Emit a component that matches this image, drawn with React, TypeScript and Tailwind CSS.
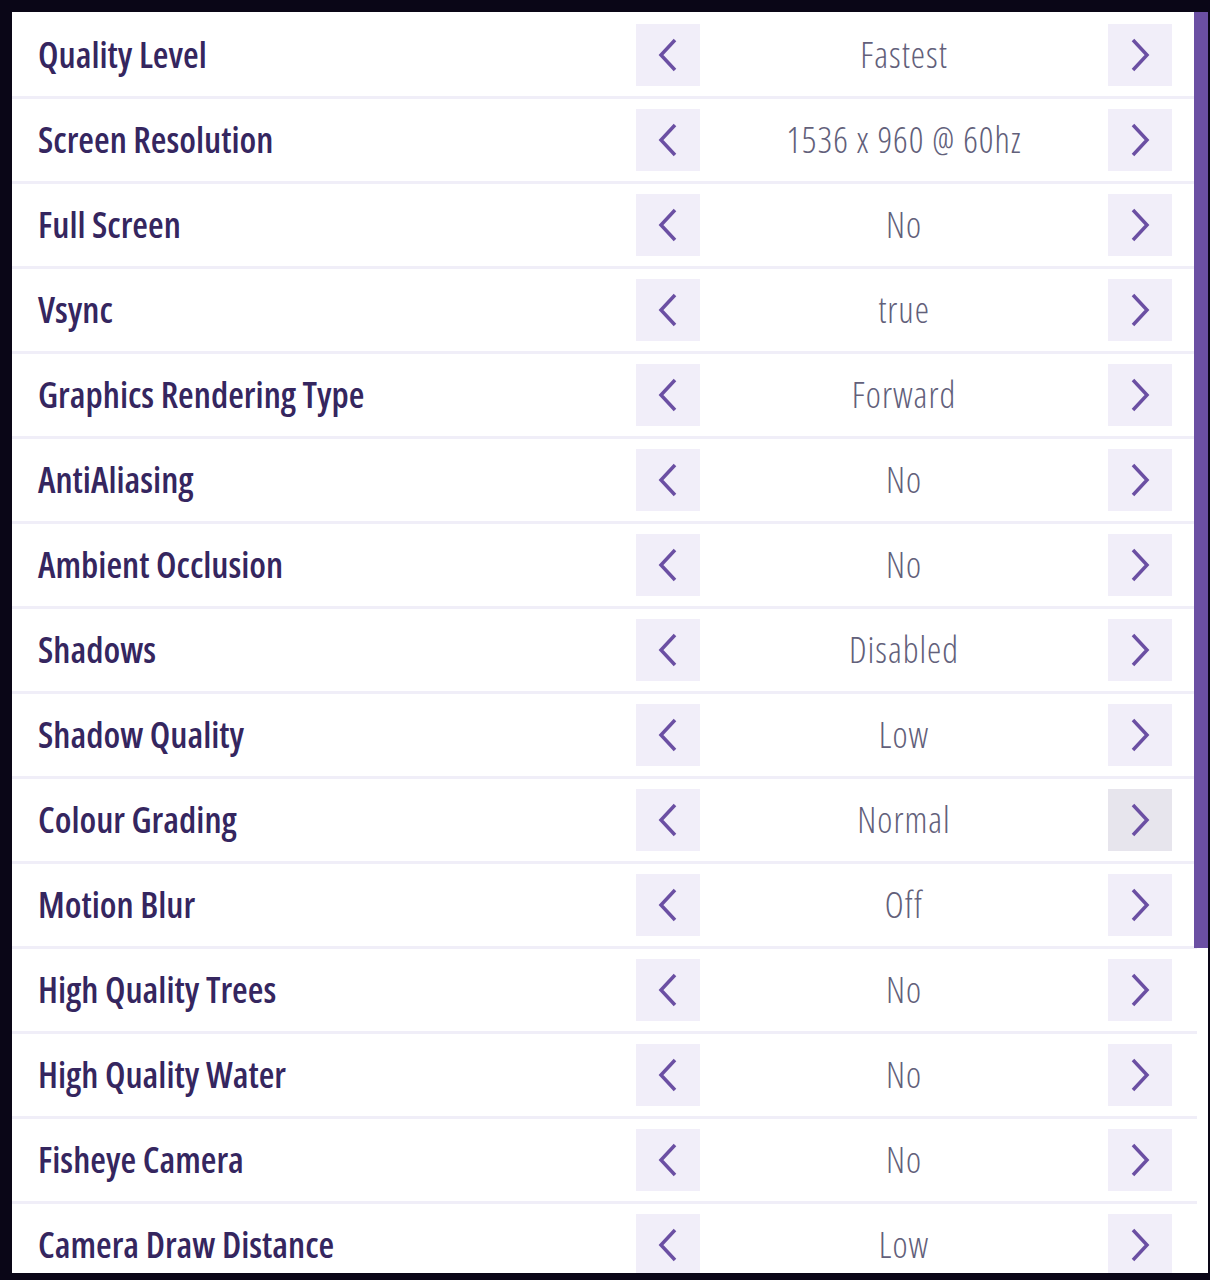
import React from 'react';

const settings = [
  { label: 'Quality Level', value: 'Fastest' },
  { label: 'Screen Resolution', value: '1536 x 960 @ 60hz' },
  { label: 'Full Screen', value: 'No' },
  { label: 'Vsync', value: 'true' },
  { label: 'Graphics Rendering Type', value: 'Forward' },
  { label: 'AntiAliasing', value: 'No' },
  { label: 'Ambient Occlusion', value: 'No' },
  { label: 'Shadows', value: 'Disabled' },
  { label: 'Shadow Quality', value: 'Low' },
  { label: 'Colour Grading', value: 'Normal', hover: true },
  { label: 'Motion Blur', value: 'Off' },
  { label: 'High Quality Trees', value: 'No' },
  { label: 'High Quality Water', value: 'No' },
  { label: 'Fisheye Camera', value: 'No' },
  { label: 'Camera Draw Distance', value: 'Low' },
];

function Chevron({ dir }: { dir: 'left' | 'right' }) {
  const points = dir === 'left' ? '17,2 3,17 17,32' : '3,2 17,17 3,32';
  return (
    <svg width="20" height="34" viewBox="0 0 20 34" fill="none">
      <polyline points={points} stroke="#6b4fa3" strokeWidth="3.5" strokeLinejoin="miter" />
    </svg>
  );
}

function StepButton({ dir, hover }: { dir: 'left' | 'right'; hover?: boolean }) {
  return (
    <button
      className={`flex h-[62px] w-[64px] shrink-0 items-center justify-center ${
        hover ? 'bg-[#e7e5ed]' : 'bg-[#f1eef9]'
      }`}
    >
      <Chevron dir={dir} />
    </button>
  );
}

export default function App() {
  return (
    <div className="h-[1280px] overflow-hidden bg-[#0a0617] pl-[12px] pr-[2px] pt-[12px] font-['Open_Sans',sans-serif] font-stretch-condensed">
      <div className="relative h-[1261px] overflow-hidden bg-white">
        <div className="mr-[11px] pt-[2px]">
          {settings.map((s) => (
            <div key={s.label} className="flex h-[85px] items-center border-b-[3px] border-[#f0eef8]">
              <div className="flex-1 pl-[26px] text-[36px] font-semibold text-[#35265f]">{s.label}</div>
              <StepButton dir="left" />
              <div className="w-[408px] text-center text-[36px] font-light tracking-[1px] text-[#62607a]">
                {s.value}
              </div>
              <StepButton dir="right" hover={s.hover} />
              <div className="w-[25px]" />
            </div>
          ))}
        </div>
        <div className="absolute right-0 top-0 h-[936px] w-[14px] bg-[#6b4fa3]" />
      </div>
    </div>
  );
}
